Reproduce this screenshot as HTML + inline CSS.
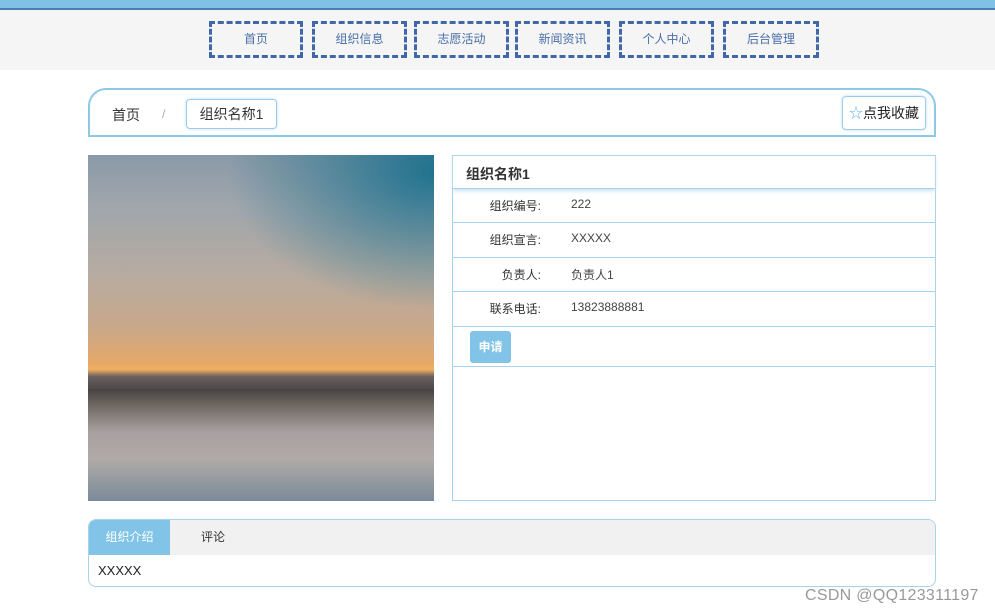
<!DOCTYPE html>
<html><head><meta charset="utf-8"><style>
*{margin:0;padding:0;box-sizing:border-box}
body{width:995px;height:615px;background:#fff;font-family:"Liberation Sans","Noto Sans CJK SC",sans-serif;position:relative;overflow:hidden;font-size:12px;color:#333}
.top{position:absolute;left:0;top:0;width:995px;height:10px;background:#80c2e6;border-bottom:2px solid #4a7fb5}
.nav{position:absolute;left:0;top:10px;width:995px;height:60px;background:#f5f5f5}
.nb{position:absolute;top:21px;height:37px;border:3px dashed #4068a8;color:#4a6fa8;font-size:12px;text-align:center;line-height:31px}
.bc{position:absolute;left:88px;top:88px;width:848px;height:49px;border:2px solid #8ec8e8;border-bottom-width:2px;border-radius:18px 18px 0 0}
.pic{position:absolute;left:88px;top:155px;width:346px;height:346px;background:linear-gradient(180deg,#8a9aa8 0%,#a0a6ac 15%,#b7aba0 35%,#c9a88a 50%,#e5a868 60%,#f0b060 62%,#6b6060 64%,#4a4646 68%,#6d6660 72%,#a8a0a0 80%,#b0aaa8 88%,#7a8a98 100%)}
.pic:after{content:"";position:absolute;right:0;top:0;width:60%;height:45%;background:radial-gradient(ellipse at 100% 10%,rgba(20,110,140,.9),rgba(40,120,150,0) 70%)}
.info{position:absolute;left:452px;top:155px;width:484px;height:346px;border:1px solid #a9d2ea}
.row{position:absolute;left:0;width:482px;border-top:1px solid #a9d2ea;height:35px}
.lab{position:absolute;left:0;width:88px;text-align:right;top:8px;font-size:12px}
.val{position:absolute;left:118px;top:8px;font-size:12px;color:#444}
.tabs{position:absolute;left:88px;top:519px;width:848px;height:68px;border:1px solid #a9d2ea;border-radius:8px;overflow:hidden}
</style></head><body>
<div class="top"></div>
<div class="nav">
<div class="nb" style="left:209px;width:94px;top:11px">首页</div>
<div class="nb" style="left:312px;width:95px;top:11px">组织信息</div>
<div class="nb" style="left:414px;width:95px;top:11px">志愿活动</div>
<div class="nb" style="left:515px;width:95px;top:11px">新闻资讯</div>
<div class="nb" style="left:619px;width:95px;top:11px">个人中心</div>
<div class="nb" style="left:723px;width:96px;top:11px">后台管理</div>
</div>
<div class="bc">
<span style="position:absolute;left:22px;top:15px;font-size:14px">首页</span>
<span style="position:absolute;left:72px;top:17px;color:#aaa">/</span>
<div style="position:absolute;left:96px;top:9px;width:91px;height:30px;border:1px solid #9ccbe8;border-radius:4px;box-shadow:0 0 3px #b8dcf0;font-size:14px;line-height:28px;text-align:center">组织名称1</div>
<div style="position:absolute;left:752px;top:6px;width:84px;height:34px;border:1px solid #9ccbe8;border-radius:4px;box-shadow:0 0 3px #b8dcf0;font-size:14px;line-height:32px;text-align:center;color:#222"><span style="color:#6ab0e0">☆</span>点我收藏</div>
</div>
<div class="pic"></div>
<div class="info">
<div style="position:absolute;left:0;top:0;width:482px;height:33px;box-shadow:0 2px 4px #c8e2f2;font-weight:bold;font-size:14px;padding:8px 0 0 13px">组织名称1</div>
<div class="row" style="top:32px"><span class="lab">组织编号:</span><span class="val">222</span></div>
<div class="row" style="top:66px"><span class="lab">组织宣言:</span><span class="val">XXXXX</span></div>
<div class="row" style="top:101px"><span class="lab">负责人:</span><span class="val">负责人1</span></div>
<div class="row" style="top:135px"><span class="lab">联系电话:</span><span class="val">13823888881</span></div>
<div class="row" style="top:170px;height:40px"><div style="position:absolute;left:17px;top:4px;width:41px;height:32px;background:#82c3e8;border-radius:3px;color:#fff;font-weight:bold;text-align:center;line-height:32px">申请</div></div>
<div class="row" style="top:210px;height:1px"></div>
</div>
<div class="tabs">
<div style="position:absolute;left:0;top:0;width:848px;height:35px;background:#f1f1f1"></div>
<div style="position:absolute;left:0;top:0;width:81px;height:35px;background:#82c3e8;color:#fff;text-align:center;line-height:35px">组织介绍</div>
<div style="position:absolute;left:112px;top:0;line-height:35px">评论</div>
<div style="position:absolute;left:9px;top:43px;font-size:13px;color:#222">XXXXX</div>
</div>
<div style="position:absolute;left:805px;top:587px;font-size:16px;color:#999;letter-spacing:0.3px">CSDN @QQ123311197</div>
</body></html>
